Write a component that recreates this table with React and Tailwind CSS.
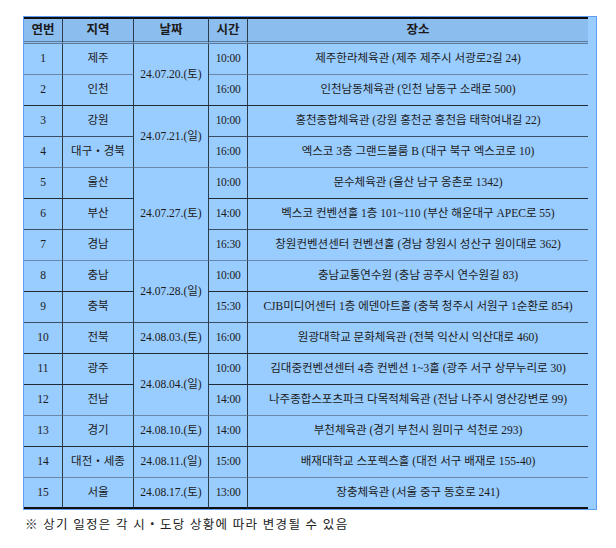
const rows = [
  { no: 1, region: "제주", time: "10:00", place: "제주한라체육관 (제주 제주시 서광로2길 24)", line: "border-b-[#6a86a6]" },
  { no: 2, region: "인천", time: "16:00", place: "인천남동체육관 (인천 남동구 소래로 500)", line: "border-b-[#1e2a36]" },
  { no: 3, region: "강원", time: "10:00", place: "홍천종합체육관 (강원 홍천군 홍천읍 태학여내길 22)", line: "border-b-[#3b4d60]" },
  { no: 4, region: "대구・경북", time: "16:00", place: "엑스코 3층 그랜드볼룸 B (대구 북구 엑스코로 10)", line: "border-b-[#6a86a6]" },
  { no: 5, region: "울산", time: "10:00", place: "문수체육관 (울산 남구 옹촌로 1342)", line: "border-b-[#1e2a36]" },
  { no: 6, region: "부산", time: "14:00", place: "벡스코 컨벤션홀 1층 101~110 (부산 해운대구 APEC로 55)", line: "border-b-[#3b4d60]" },
  { no: 7, region: "경남", time: "16:30", place: "창원컨벤션센터 컨벤션홀 (경남 창원시 성산구 원이대로 362)", line: "border-b-[#6a86a6]" },
  { no: 8, region: "충남", time: "10:00", place: "충남교통연수원 (충남 공주시 연수원길 83)", line: "border-b-[#1e2a36]" },
  { no: 9, region: "충북", time: "15:30", place: "CJB미디어센터 1층 에덴아트홀 (충북 청주시 서원구 1순환로 854)", line: "border-b-[#3b4d60]" },
  { no: 10, region: "전북", time: "16:00", place: "원광대학교 문화체육관 (전북 익산시 익산대로 460)", line: "border-b-[#1e2a36]" },
  { no: 11, region: "광주", time: "10:00", place: "김대중컨벤션센터 4층 컨벤션 1~3홀 (광주 서구 상무누리로 30)", line: "border-b-[#1e2a36]" },
  { no: 12, region: "전남", time: "14:00", place: "나주종합스포츠파크 다목적체육관 (전남 나주시 영산강변로 99)", line: "border-b-[#6a86a6]" },
  { no: 13, region: "경기", time: "14:00", place: "부천체육관 (경기 부천시 원미구 석천로 293)", line: "border-b-[#1e2a36]" },
  { no: 14, region: "대전・세종", time: "15:00", place: "배재대학교 스포렉스홀 (대전 서구 배재로 155-40)", line: "border-b-[#6a86a6]" },
  { no: 15, region: "서울", time: "13:00", place: "장충체육관 (서울 중구 동호로 241)", line: "border-b-2 border-b-[#111]" },
];

// date cell shown on the first row of each group
const dates = {
  1: { text: "24.07.20.(토)", span: 2 },
  3: { text: "24.07.21.(일)", span: 2 },
  5: { text: "24.07.27.(토)", span: 3 },
  8: { text: "24.07.28.(일)", span: 2 },
  10: { text: "24.08.03.(토)", span: 1 },
  11: { text: "24.08.04.(일)", span: 2 },
  13: { text: "24.08.10.(토)", span: 1 },
  14: { text: "24.08.11.(일)", span: 1 },
  15: { text: "24.08.17.(토)", span: 1 },
};

const font = { fontFamily: "'Liberation Serif', 'Noto Sans CJK KR', serif" };

export default function App() {
  return (
    <div className="w-[616px] h-[548px] bg-white pt-4 pl-[23px]" style={font}>
      <div className="w-[574px] border border-[#5c9cf2] bg-[#99ccff] pr-[8px]">
        <table className="w-[564px] table-fixed border-separate border-spacing-0 text-[11.5px] text-[#1b1b1b]">
          <colgroup>
            <col className="w-[39px]" />
            <col className="w-[71px]" />
            <col className="w-[75px]" />
            <col className="w-[39px]" />
            <col className="w-[340px]" />
          </colgroup>
          <thead>
            <tr className="bg-[#8bbdef] text-[12.5px] font-bold">
              {["연번", "지역", "날짜", "시간"].map((h) => (
                <th key={h} className="h-[27px] border-t-2 border-t-[#111] border-b-[3px] border-double border-b-[#5d7a9a] border-r border-r-[#2d3a47] p-0 text-center">
                  {h}
                </th>
              ))}
              <th className="h-[27px] border-t-2 border-t-[#111] border-b-[3px] border-double border-b-[#5d7a9a] p-0 text-center">장소</th>
            </tr>
          </thead>
          <tbody>
            {rows.map((r, i) => {
              const d = dates[r.no];
              const last = rows[i + (d ? d.span : 1) - 1];
              return (
                <tr key={r.no}>
                  <td className={`h-[31px] border-b border-r border-r-[#2d3a47] p-0 text-center ${r.line}`}>{r.no}</td>
                  <td className={`border-b border-r border-r-[#2d3a47] p-0 text-center ${r.line}`}>{r.region}</td>
                  {d && (
                    <td rowSpan={d.span} className={`border-b border-r border-r-[#2d3a47] p-0 text-center ${last.line}`}>
                      {d.text}
                    </td>
                  )}
                  <td className={`border-b border-r border-r-[#2d3a47] p-0 text-center tracking-[-0.3px] ${r.line}`}>{r.time}</td>
                  <td className={`border-b p-0 text-center whitespace-nowrap ${r.line}`}>{r.place}</td>
                </tr>
              );
            })}
          </tbody>
        </table>
      </div>
      <p className="mt-[6px] pl-[2px] text-[12.5px] tracking-[1.3px] text-[#222]">
        ※ 상기 일정은 각 시・도당 상황에 따라 변경될 수 있음
      </p>
    </div>
  );
}
